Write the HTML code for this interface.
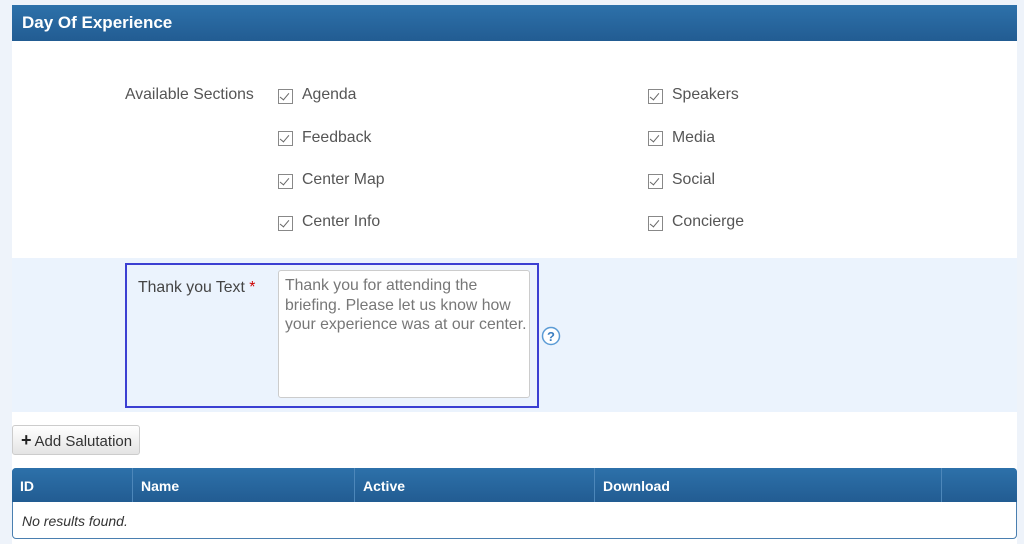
<!DOCTYPE html>
<html><head><style>
body{margin:0;width:1024px;height:544px;background:#eef3fa;font-family:"Liberation Sans",sans-serif;position:relative;overflow:hidden}
.a{position:absolute}
.panel{left:12px;top:5px;width:1005px;height:539px;background:#fff}
.hdr{left:12px;top:5px;width:1005px;height:36px;background:linear-gradient(#2d71aa,#225c92);color:#fff;font-weight:bold;font-size:17px;line-height:36px;text-indent:10px}
.lbl{font-size:15.8px;color:#555}
.cb{width:13px;height:13px;border:1px solid #888;background:#fff}
.cb:after{content:"";position:absolute;left:3px;top:1px;width:4px;height:8px;border:solid #666;border-width:0 1.5px 1.5px 0;transform:rotate(40deg)}
.band{left:12px;top:258px;width:1005px;height:154px;background:#ebf3fd}
.box{left:125px;top:263px;width:410px;height:141px;border:2px solid #3b3fd2}
.ta{left:278px;top:270px;width:252px;height:128px;background:#fff;border:1px solid #ccc;border-radius:3px;color:#777;font-size:15.8px;line-height:19.5px;padding:5px 2px 5px 6px;box-sizing:border-box;white-space:nowrap}
.btn{left:12px;top:425px;width:128px;height:30px;border:1px solid #ccc;border-radius:3px;background:linear-gradient(#fff,#e4e4e4);font-size:15px;color:#333;line-height:28px;box-sizing:border-box}
.th{top:468px;height:34px;background:linear-gradient(#2d71aa,#225c92);color:#fff;font-weight:bold;font-size:14px;line-height:36px;border-right:1px solid #4d87ba;box-sizing:border-box;padding-left:8px}
</style></head><body>
<div class="a panel"></div>
<div class="a hdr">Day Of Experience</div>
<div class="a lbl" style="left:125px;top:86px">Available Sections</div>
<div class="a cb" style="left:278px;top:89px"></div><div class="a lbl" style="left:302px;top:86px">Agenda</div>
<div class="a cb" style="left:278px;top:131px"></div><div class="a lbl" style="left:302px;top:129px">Feedback</div>
<div class="a cb" style="left:278px;top:174px"></div><div class="a lbl" style="left:302px;top:171px">Center Map</div>
<div class="a cb" style="left:278px;top:216px"></div><div class="a lbl" style="left:302px;top:213px">Center Info</div>
<div class="a cb" style="left:648px;top:89px"></div><div class="a lbl" style="left:672px;top:86px">Speakers</div>
<div class="a cb" style="left:648px;top:131px"></div><div class="a lbl" style="left:672px;top:129px">Media</div>
<div class="a cb" style="left:648px;top:174px"></div><div class="a lbl" style="left:672px;top:171px">Social</div>
<div class="a cb" style="left:648px;top:216px"></div><div class="a lbl" style="left:672px;top:213px">Concierge</div>
<div class="a band"></div>
<div class="a box"></div>
<div class="a lbl" style="left:138px;top:279px;color:#444">Thank you Text <span style="color:#c00">*</span></div>
<div class="a ta">Thank you for attending the<br>briefing. Please let us know how<br>your experience was at our center.</div>
<svg class="a" style="left:541px;top:326px" width="20" height="20"><circle cx="10" cy="10" r="8.5" fill="#fff" stroke="#5b9bd5" stroke-width="1.5"/><text x="10" y="15" text-anchor="middle" font-family="Liberation Sans" font-weight="bold" font-size="13" fill="#3d7fc1">?</text></svg>
<div class="a btn"><span style="font-weight:bold;font-size:18px;margin:0 3px 0 8px;color:#222">+</span>Add Salutation</div>
<div class="a" style="left:12px;top:468px;width:1005px;height:71px;border:1px solid #4a7fb0;border-radius:4px;box-sizing:border-box"></div>
<div class="a th" style="left:12px;width:121px;border-top-left-radius:4px">ID</div>
<div class="a th" style="left:133px;width:222px">Name</div>
<div class="a th" style="left:355px;width:240px">Active</div>
<div class="a th" style="left:595px;width:347px">Download</div>
<div class="a th" style="left:942px;width:75px;border-top-right-radius:4px;border-right:0"></div>
<div class="a" style="left:22px;top:513px;font-size:14px;font-style:italic;color:#333">No results found.</div>
</body></html>
